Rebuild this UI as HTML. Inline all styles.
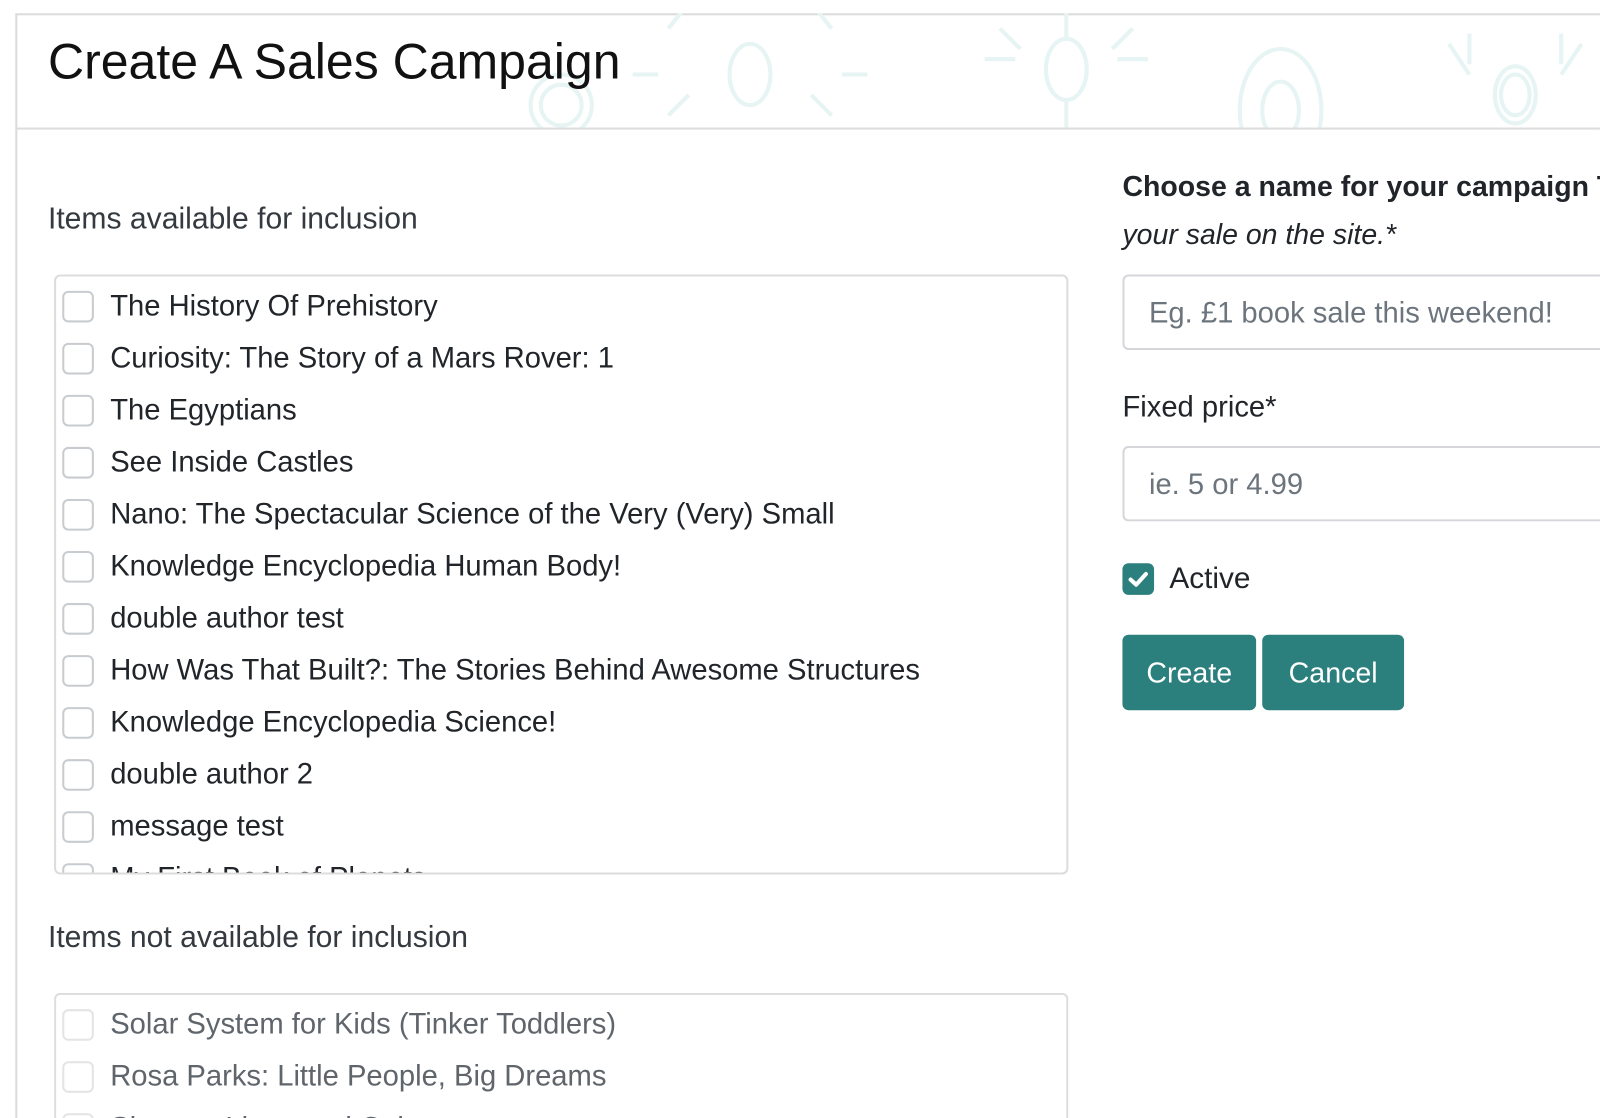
<!DOCTYPE html>
<html><head><style>
*{margin:0;padding:0;box-sizing:border-box}
html,body{width:1600px;height:1118px;overflow:hidden}
body{background:#fff;font-family:"Liberation Sans",sans-serif;color:#212529;position:relative}
#w{position:absolute;left:0;top:0;width:1568px;height:1096px;transform:scale(1.0204);transform-origin:0 0;overflow:hidden}
.card{position:absolute;left:15px;top:13px;width:1553px;height:1083px;border:2px solid #dcdcdc;border-right:none;border-bottom:none}
.hdr{position:absolute;left:15px;top:13px;width:1553px;height:114px;border-bottom:2px solid #dcdcdc;overflow:hidden}
.a{position:absolute;white-space:nowrap}
.cb{position:absolute;left:61px;width:31px;height:31px;border:2px solid #c8cbcf;border-radius:6px;background:#fff}
.it{position:absolute;left:108px;font-size:28.6px;white-space:nowrap;line-height:31px}
.box{position:absolute;left:53px;width:994px;border:2px solid #dcdcdc;border-radius:6px;overflow:hidden}
.inp{position:absolute;left:1100px;width:468px;height:74px;border:2px solid #d4d6d9;border-right:none;border-radius:6px 0 0 6px;color:#6c757d;font-size:28.6px;padding:20px 0 0 24px;white-space:nowrap;overflow:hidden}
.btn{position:absolute;top:622px;height:74px;background:#2b7f7c;border-radius:6px;color:#fff;font-size:28px;text-align:center;line-height:76px}
</style></head><body><div id="w">
<div class="card"></div>
<div class="hdr">
<svg width="1553" height="112" style="position:absolute;left:0;top:0" fill="none" stroke="#e6f4f3" stroke-width="4">
<circle cx="535" cy="90" r="30"/><circle cx="535" cy="90" r="20"/>
<ellipse cx="720" cy="60" rx="20" ry="30"/><path d="M640 15 L660 -10 M800 15 L780 -10 M630 60 h-25 M810 60 h25 M640 100 L660 80 M800 100 L780 80"/>
<ellipse cx="1030" cy="55" rx="20" ry="30"/><path d="M950 45 h30 M1080 45 h30 M1030 0 v25 M1030 85 v27 M965 15 l20 20 M1095 15 l-20 20"/>
<ellipse cx="1240" cy="95" rx="40" ry="60"/><ellipse cx="1240" cy="95" rx="18" ry="28"/>
<ellipse cx="1470" cy="80" rx="20" ry="28"/><ellipse cx="1470" cy="80" rx="14" ry="20"/><path d="M1405 30 L1425 60 M1535 30 L1515 60 M1425 20 v30 M1515 20 v30"/>
</svg>
<div class="a" style="left:32px;top:20px;font-size:49px;color:#111">Create A Sales Campaign</div>
</div>

<div class="a" style="left:47px;top:198px;font-size:29.5px;color:#343a40">Items available for inclusion</div>
<div class="box" style="top:269px;height:588px"></div>
<div class="cb" style="top:285px"></div><div class="it" style="top:285px">The History Of Prehistory</div>
<div class="cb" style="top:336px"></div><div class="it" style="top:336px">Curiosity: The Story of a Mars Rover: 1</div>
<div class="cb" style="top:387px"></div><div class="it" style="top:387px">The Egyptians</div>
<div class="cb" style="top:438px"></div><div class="it" style="top:438px">See Inside Castles</div>
<div class="cb" style="top:489px"></div><div class="it" style="top:489px">Nano: The Spectacular Science of the Very (Very) Small</div>
<div class="cb" style="top:540px"></div><div class="it" style="top:540px">Knowledge Encyclopedia Human Body!</div>
<div class="cb" style="top:591px"></div><div class="it" style="top:591px">double author test</div>
<div class="cb" style="top:642px"></div><div class="it" style="top:642px">How Was That Built?: The Stories Behind Awesome Structures</div>
<div class="cb" style="top:693px"></div><div class="it" style="top:693px">Knowledge Encyclopedia Science!</div>
<div class="cb" style="top:744px"></div><div class="it" style="top:744px">double author 2</div>
<div class="cb" style="top:795px"></div><div class="it" style="top:795px">message test</div>
<div style="position:absolute;left:55px;top:840px;width:990px;height:15px;overflow:hidden">
<div class="cb" style="left:6px;top:6px"></div><div class="it" style="left:53px;top:6px">My First Book of Planets</div></div>

<div class="a" style="left:47px;top:902px;font-size:29.5px;color:#343a40">Items not available for inclusion</div>
<div class="box" style="top:973px;height:123px;border-bottom:none;border-radius:6px 6px 0 0">
<div class="cb" style="left:6px;top:14px;border-color:#e2e4e6"></div><div class="it" style="left:53px;top:14px;color:#5f656b">Solar System for Kids (Tinker Toddlers)</div>
<div class="cb" style="left:6px;top:65px;border-color:#e2e4e6"></div><div class="it" style="left:53px;top:65px;color:#5f656b">Rosa Parks: Little People, Big Dreams</div>
<div class="cb" style="left:6px;top:116px;border-color:#e2e4e6"></div><div class="it" style="left:53px;top:116px;color:#5f656b">Shapes, Lines and Colours</div>
</div>

<div class="a" style="left:1100px;top:167px;font-size:27.9px;font-weight:bold;width:468px;overflow:hidden">Choose a name for your campaign This will appear on</div>
<div class="a" style="left:1100px;top:214px;font-size:27.9px;font-style:italic">your sale on the site.*</div>
<div class="inp" style="top:269px">Eg. £1 book sale this weekend!</div>
<div class="a" style="left:1100px;top:383px;font-size:28.6px">Fixed price*</div>
<div class="inp" style="top:437px">ie. 5 or 4.99</div>
<div style="position:absolute;left:1100px;top:552px;width:31px;height:31px;background:#2b7f7c;border-radius:6px">
<svg width="31" height="31"><path d="M8 16 L13.5 21 L23 10.5" stroke="#fff" stroke-width="4" fill="none" stroke-linecap="round" stroke-linejoin="round"/></svg></div>
<div class="a" style="left:1146px;top:551px;font-size:29.2px">Active</div>
<div class="btn" style="left:1100px;width:131px">Create</div>
<div class="btn" style="left:1237px;width:139px">Cancel</div>
</div></body></html>
